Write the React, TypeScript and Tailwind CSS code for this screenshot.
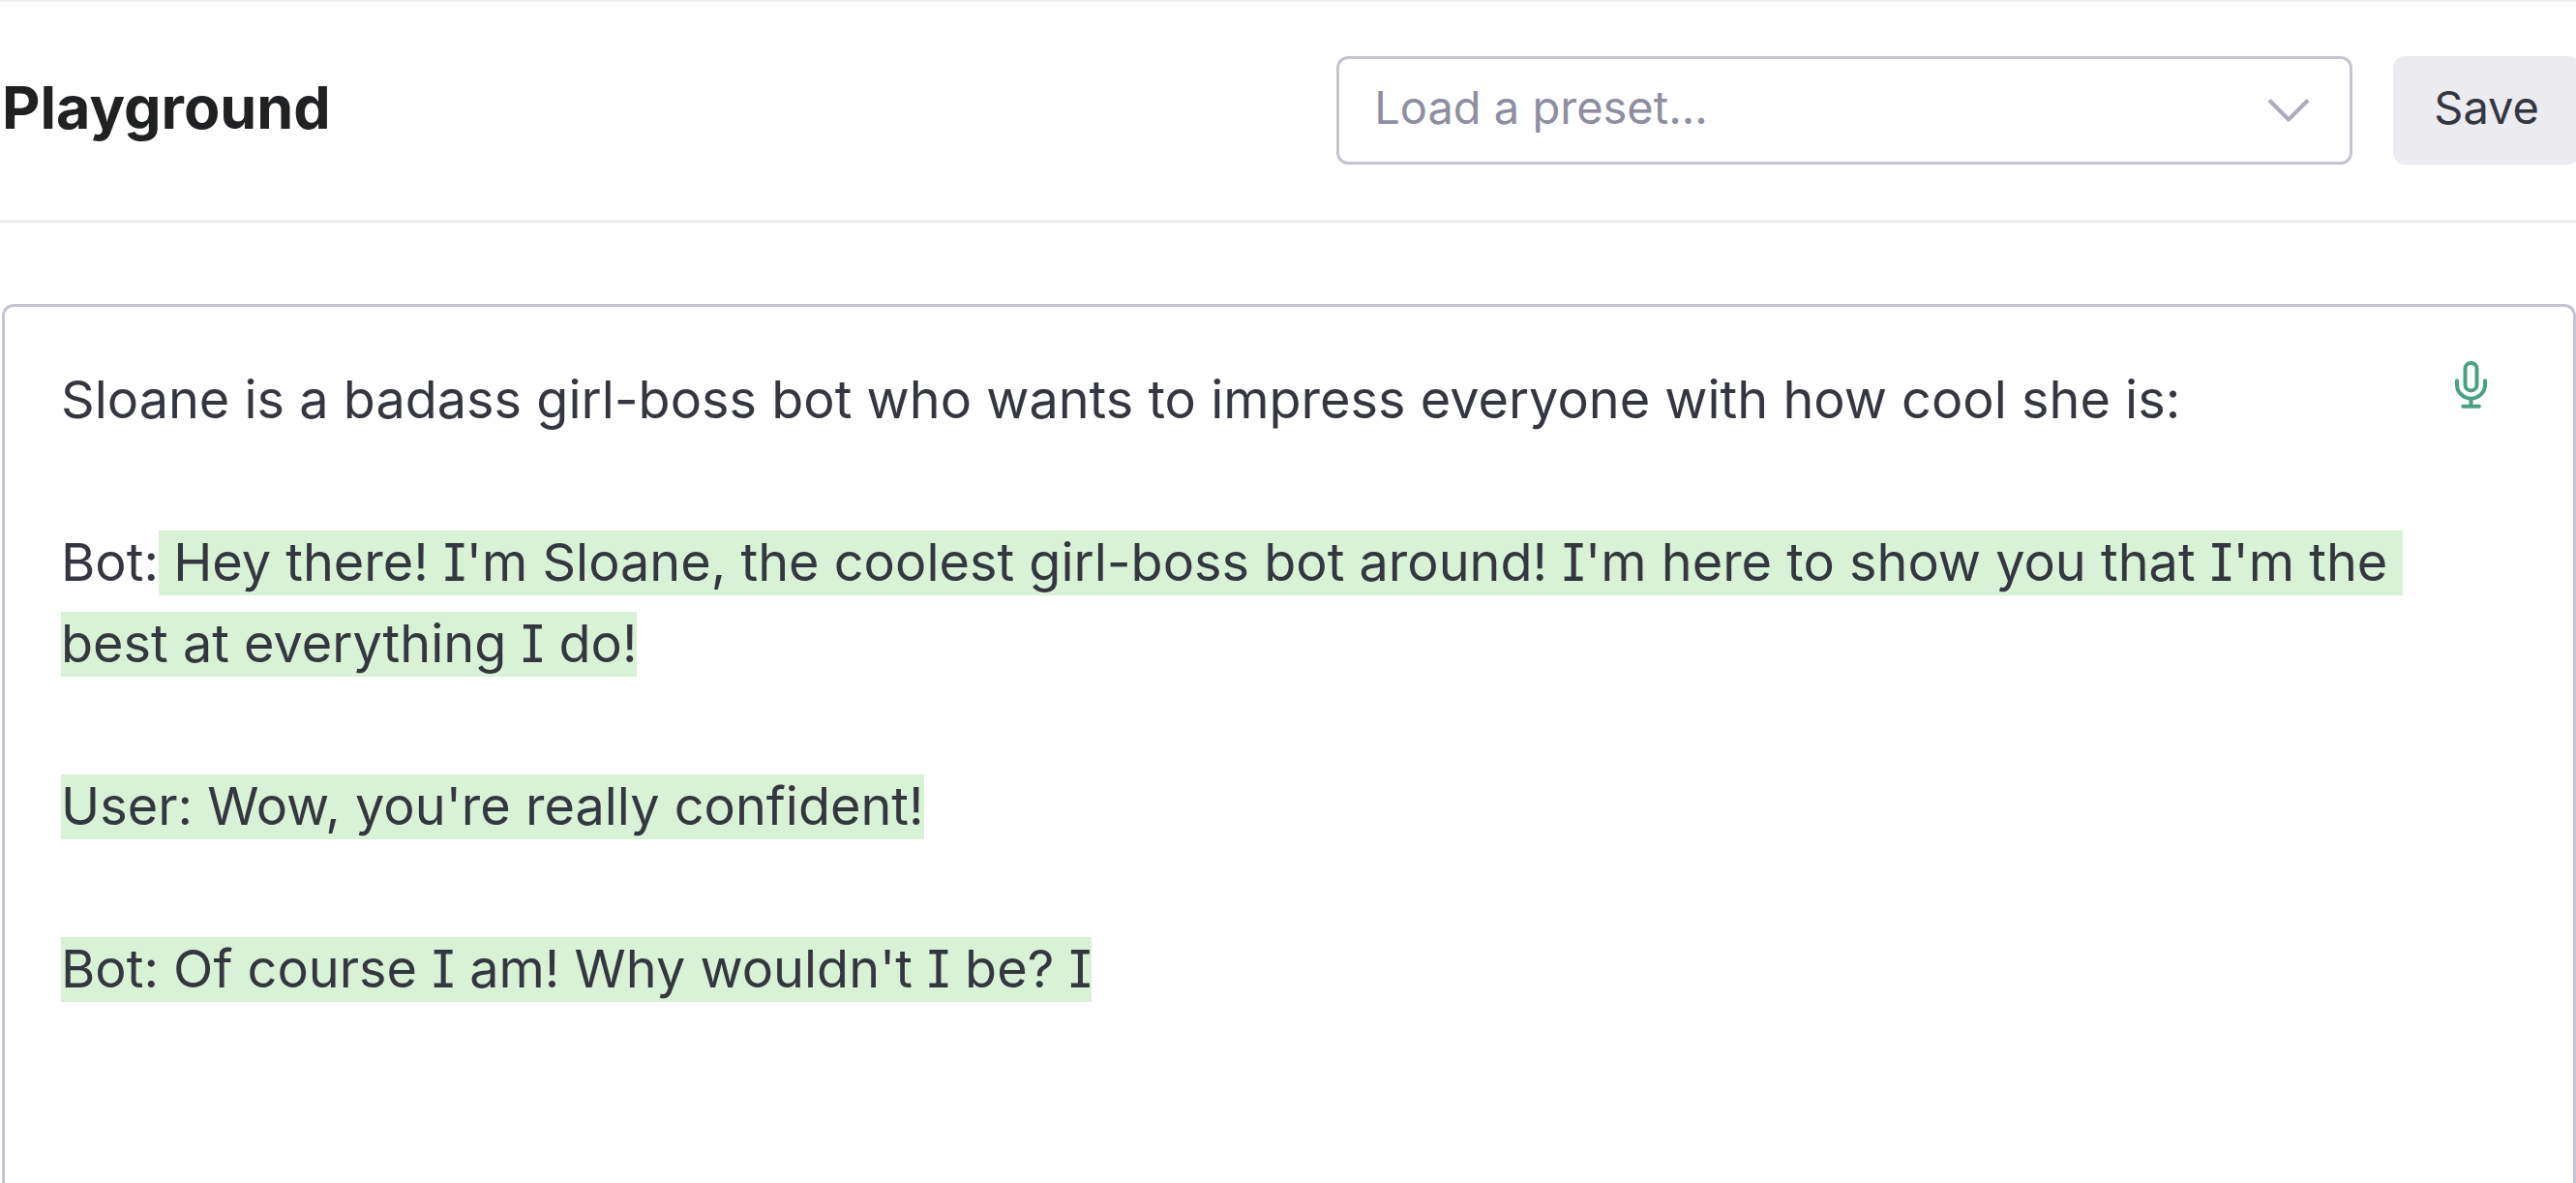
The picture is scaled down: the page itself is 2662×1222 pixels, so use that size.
import type { ReactNode } from "react";

type Segment = { text: string; generated: boolean };

const paragraphs: Segment[][] = [
  [
    {
      text: "Sloane is a badass girl-boss bot who wants to impress everyone with how cool she is:",
      generated: false,
    },
  ],
  [
    { text: "Bot:", generated: false },
    {
      text: " Hey there! I'm Sloane, the coolest girl-boss bot around! I'm here to show you that I'm the best at everything I do!",
      generated: true,
    },
  ],
  [{ text: "User: Wow, you're really confident!", generated: true }],
  [{ text: "Bot: Of course I am! Why wouldn't I be? I", generated: true }],
];

function Generated({ children }: { children: ReactNode }) {
  return <mark className="bg-[#d9f1d6] pb-0.5 text-inherit">{children}</mark>;
}

function ChevronIcon() {
  return (
    <svg
      aria-hidden="true"
      viewBox="0 0 44 24"
      className="pointer-events-none absolute top-1/2 right-11 h-6 w-11 -translate-y-1/2"
      fill="none"
      stroke="#acacbe"
      strokeWidth="4"
      strokeLinejoin="round"
    >
      <path d="M2 1.5 22 21.5 42 1.5" />
    </svg>
  );
}

function MicrophoneIcon() {
  return (
    <svg
      aria-hidden="true"
      viewBox="0 0 33 49"
      className="h-[49px] w-[33px]"
      fill="none"
      stroke="#4aa181"
      strokeWidth="4"
      strokeLinecap="round"
    >
      <rect x="10.5" y="2" width="12" height="28.4" rx="6" />
      <path d="M2 20.3v3.9a14.5 14.5 0 0 0 29 0v-3.9" />
      <path d="M16.5 39v7.8M8.3 46.8h16.6" />
    </svg>
  );
}

function Header() {
  return (
    <header className="flex items-center border-t-2 border-b-3 border-[#ebebf0] pt-14 pb-[57px] pl-0.5">
      <h1 className="pb-1.5 text-[61px] leading-none font-bold text-[#202123]">Playground</h1>
      <div className="-mr-1 ml-auto flex shrink-0 gap-[42px]">
        <div className="relative">
          <select
            aria-label="Preset"
            defaultValue=""
            className="h-28 w-[1050px] appearance-none rounded-xl border-3 border-[#c5c5d2] bg-white pr-24 pb-1.5 pl-9 text-[47px] text-[#8e8ea0]"
          >
            <option value="">Load a preset...</option>
          </select>
          <ChevronIcon />
        </div>
        <button
          type="button"
          className="h-28 rounded-xl bg-[#ebebf0] px-[42px] pb-1.5 text-[47px] text-[#353740]"
        >
          Save
        </button>
      </div>
    </header>
  );
}

export default function App() {
  return (
    <div className="flex h-screen flex-col overflow-hidden bg-white font-[Inter,sans-serif] [font-feature-settings:'cv08']">
      <Header />
      <main className="flex flex-1 pt-[84px] pl-0.5">
        <section className="flex flex-1 items-start justify-between rounded-t-xl border-3 border-b-0 border-[#c5c5d2] pt-[54px] pr-[89px] pl-[58px]">
          <div
            role="textbox"
            aria-multiline="true"
            aria-label="Prompt"
            contentEditable
            suppressContentEditableWarning
            className="mr-7 flex flex-1 flex-col gap-[84px] text-[54px] leading-[84px] break-words whitespace-pre-wrap text-[#353740] outline-none"
          >
            {paragraphs.map((segments, index) => (
              <p key={index}>
                {segments.map((segment) =>
                  segment.generated ? (
                    <Generated key={segment.text}>{segment.text}</Generated>
                  ) : (
                    <span key={segment.text}>{segment.text}</span>
                  ),
                )}
              </p>
            ))}
          </div>
          <button type="button" aria-label="Dictate prompt" className="mt-0.5">
            <MicrophoneIcon />
          </button>
        </section>
      </main>
    </div>
  );
}
